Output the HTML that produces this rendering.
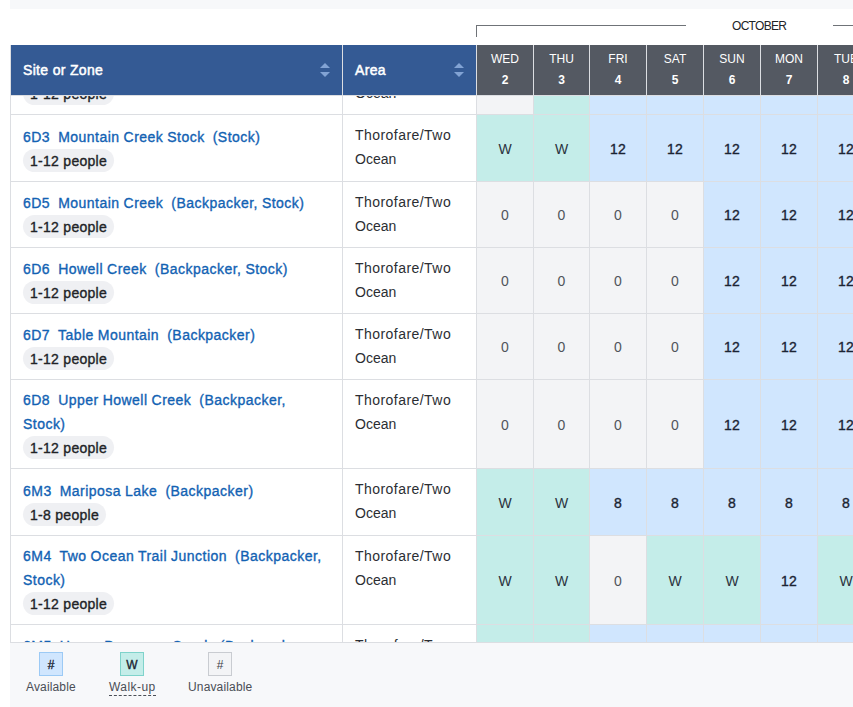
<!DOCTYPE html><html><head><meta charset="utf-8"><style>
*{box-sizing:border-box;margin:0;padding:0}
html,body{width:853px;height:707px;overflow:hidden;background:#fff;font-family:"Liberation Sans",sans-serif;color:#212326}
.a{position:absolute}
.topbar{left:10px;top:0;width:843px;height:9px;background:#f7f8fa}
.mline{height:1px;background:#6f7378}
.month{font-size:12px;letter-spacing:-0.7px;color:#212326;line-height:14px}
.clip{left:0;top:0;width:853px;height:642px;overflow:hidden}
.hb{background:#345a94;color:#fff;font-size:14px;line-height:16px;-webkit-text-stroke:0.5px #fff;letter-spacing:0.33px}
.hd{background:#545962;color:#fff;text-align:center;font-size:12px;line-height:14px}
.hd b{font-weight:bold}
.vl{width:1px;background:#dcdee2}
.hl{height:1px;background:#dcdee2}
.title{color:#1262b3;font-size:14px;line-height:24px;white-space:nowrap;-webkit-text-stroke:0.35px #1262b3;letter-spacing:0.47px;word-spacing:-0.32px}
.pill{background:#eff0f3;border-radius:12px;height:23px;font-size:14px;line-height:25px;padding:0 7px;white-space:nowrap;-webkit-text-stroke:0.35px #212326;letter-spacing:0.28px}
.area{color:#2b2e33;font-size:14px;line-height:24px;letter-spacing:0.45px;white-space:nowrap}
.cell{text-align:center;font-size:14px;padding-top:1px}
.cA{background:#d0e6fe;color:#1b2433;-webkit-text-stroke:0.35px #1b2433;letter-spacing:0.2px}
.cW{background:#c4ede9;color:#2b3340}
.cU{background:#f3f4f6;color:#50545b}
.tri{width:0;height:0;border-left:5px solid transparent;border-right:5px solid transparent}
.up{border-bottom:5px solid #82a3d4}
.dn{border-top:5px solid #82a3d4}
.legend{left:10px;top:642px;width:843px;height:65px;background:#f7f8fa;border-top:1px solid #dcdee2}
.sw{width:24px;height:24px;text-align:center;font-size:12px;line-height:24px}
.lab{font-size:12px;line-height:14px;color:#4a4e56;white-space:nowrap;letter-spacing:0.15px}
</style></head><body>

<div class="a topbar"></div>
<div class="a" style="left:476px;top:25px;width:1px;height:12px;background:#6f7378"></div>
<div class="a mline" style="left:476px;top:25px;width:210px"></div>
<div class="a mline" style="left:833px;top:25px;width:30px"></div>
<div class="a month" style="left:732px;top:19px">OCTOBER</div>
<div class="a clip">
<div class="a title" style="left:23px;top:57.85px">6D2&nbsp; Mountain Creek &nbsp;(Stock)</div>
<div class="a pill" style="left:23px;top:82.35px">1-12 people</div>
<div class="a area" style="left:355px;top:56.95px">Thorofare/Two</div>
<div class="a area" style="left:355px;top:80.95px;letter-spacing:0">Ocean</div>
<div class="a cell cU" style="left:477px;top:49px;width:56px;height:65px;line-height:65px"></div>
<div class="a cell cW" style="left:534px;top:49px;width:55px;height:65px;line-height:65px">W</div>
<div class="a cell cA" style="left:590px;top:49px;width:56px;height:65px;line-height:65px"></div>
<div class="a cell cA" style="left:647px;top:49px;width:56px;height:65px;line-height:65px"></div>
<div class="a cell cA" style="left:704px;top:49px;width:56px;height:65px;line-height:65px"></div>
<div class="a cell cA" style="left:761px;top:49px;width:56px;height:65px;line-height:65px"></div>
<div class="a cell cA" style="left:818px;top:49px;width:56px;height:65px;line-height:65px"></div>
<div class="a hl" style="left:10px;top:114px;width:843px"></div>
<div class="a title" style="left:23px;top:124.85px">6D3&nbsp; Mountain Creek Stock &nbsp;(Stock)</div>
<div class="a pill" style="left:23px;top:149.35px">1-12 people</div>
<div class="a area" style="left:355px;top:122.95px">Thorofare/Two</div>
<div class="a area" style="left:355px;top:146.95px;letter-spacing:0">Ocean</div>
<div class="a cell cW" style="left:477px;top:115px;width:56px;height:66px;line-height:66px">W</div>
<div class="a cell cW" style="left:534px;top:115px;width:55px;height:66px;line-height:66px">W</div>
<div class="a cell cA" style="left:590px;top:115px;width:56px;height:66px;line-height:66px">12</div>
<div class="a cell cA" style="left:647px;top:115px;width:56px;height:66px;line-height:66px">12</div>
<div class="a cell cA" style="left:704px;top:115px;width:56px;height:66px;line-height:66px">12</div>
<div class="a cell cA" style="left:761px;top:115px;width:56px;height:66px;line-height:66px">12</div>
<div class="a cell cA" style="left:818px;top:115px;width:56px;height:66px;line-height:66px">12</div>
<div class="a hl" style="left:10px;top:181px;width:843px"></div>
<div class="a title" style="left:23px;top:190.85px">6D5&nbsp; Mountain Creek &nbsp;(Backpacker, Stock)</div>
<div class="a pill" style="left:23px;top:215.35px">1-12 people</div>
<div class="a area" style="left:355px;top:189.95px">Thorofare/Two</div>
<div class="a area" style="left:355px;top:213.95px;letter-spacing:0">Ocean</div>
<div class="a cell cU" style="left:477px;top:182px;width:56px;height:65px;line-height:65px">0</div>
<div class="a cell cU" style="left:534px;top:182px;width:55px;height:65px;line-height:65px">0</div>
<div class="a cell cU" style="left:590px;top:182px;width:56px;height:65px;line-height:65px">0</div>
<div class="a cell cU" style="left:647px;top:182px;width:56px;height:65px;line-height:65px">0</div>
<div class="a cell cA" style="left:704px;top:182px;width:56px;height:65px;line-height:65px">12</div>
<div class="a cell cA" style="left:761px;top:182px;width:56px;height:65px;line-height:65px">12</div>
<div class="a cell cA" style="left:818px;top:182px;width:56px;height:65px;line-height:65px">12</div>
<div class="a hl" style="left:10px;top:247px;width:843px"></div>
<div class="a title" style="left:23px;top:256.85px">6D6&nbsp; Howell Creek &nbsp;(Backpacker, Stock)</div>
<div class="a pill" style="left:23px;top:281.35px">1-12 people</div>
<div class="a area" style="left:355px;top:255.95px">Thorofare/Two</div>
<div class="a area" style="left:355px;top:279.95px;letter-spacing:0">Ocean</div>
<div class="a cell cU" style="left:477px;top:248px;width:56px;height:65px;line-height:65px">0</div>
<div class="a cell cU" style="left:534px;top:248px;width:55px;height:65px;line-height:65px">0</div>
<div class="a cell cU" style="left:590px;top:248px;width:56px;height:65px;line-height:65px">0</div>
<div class="a cell cU" style="left:647px;top:248px;width:56px;height:65px;line-height:65px">0</div>
<div class="a cell cA" style="left:704px;top:248px;width:56px;height:65px;line-height:65px">12</div>
<div class="a cell cA" style="left:761px;top:248px;width:56px;height:65px;line-height:65px">12</div>
<div class="a cell cA" style="left:818px;top:248px;width:56px;height:65px;line-height:65px">12</div>
<div class="a hl" style="left:10px;top:313px;width:843px"></div>
<div class="a title" style="left:23px;top:322.85px">6D7&nbsp; Table Mountain &nbsp;(Backpacker)</div>
<div class="a pill" style="left:23px;top:347.35px">1-12 people</div>
<div class="a area" style="left:355px;top:321.95px">Thorofare/Two</div>
<div class="a area" style="left:355px;top:345.95px;letter-spacing:0">Ocean</div>
<div class="a cell cU" style="left:477px;top:314px;width:56px;height:65px;line-height:65px">0</div>
<div class="a cell cU" style="left:534px;top:314px;width:55px;height:65px;line-height:65px">0</div>
<div class="a cell cU" style="left:590px;top:314px;width:56px;height:65px;line-height:65px">0</div>
<div class="a cell cU" style="left:647px;top:314px;width:56px;height:65px;line-height:65px">0</div>
<div class="a cell cA" style="left:704px;top:314px;width:56px;height:65px;line-height:65px">12</div>
<div class="a cell cA" style="left:761px;top:314px;width:56px;height:65px;line-height:65px">12</div>
<div class="a cell cA" style="left:818px;top:314px;width:56px;height:65px;line-height:65px">12</div>
<div class="a hl" style="left:10px;top:379px;width:843px"></div>
<div class="a title" style="left:23px;top:387.65px">6D8&nbsp; Upper Howell Creek &nbsp;(Backpacker,</div>
<div class="a title" style="left:23px;top:411.65px">Stock)</div>
<div class="a pill" style="left:23px;top:436.15px">1-12 people</div>
<div class="a area" style="left:355px;top:387.95px">Thorofare/Two</div>
<div class="a area" style="left:355px;top:411.95px;letter-spacing:0">Ocean</div>
<div class="a cell cU" style="left:477px;top:380px;width:56px;height:88px;line-height:88px">0</div>
<div class="a cell cU" style="left:534px;top:380px;width:55px;height:88px;line-height:88px">0</div>
<div class="a cell cU" style="left:590px;top:380px;width:56px;height:88px;line-height:88px">0</div>
<div class="a cell cU" style="left:647px;top:380px;width:56px;height:88px;line-height:88px">0</div>
<div class="a cell cA" style="left:704px;top:380px;width:56px;height:88px;line-height:88px">12</div>
<div class="a cell cA" style="left:761px;top:380px;width:56px;height:88px;line-height:88px">12</div>
<div class="a cell cA" style="left:818px;top:380px;width:56px;height:88px;line-height:88px">12</div>
<div class="a hl" style="left:10px;top:468px;width:843px"></div>
<div class="a title" style="left:23px;top:478.85px">6M3&nbsp; Mariposa Lake &nbsp;(Backpacker)</div>
<div class="a pill" style="left:23px;top:503.35px">1-8 people</div>
<div class="a area" style="left:355px;top:476.95px">Thorofare/Two</div>
<div class="a area" style="left:355px;top:500.95px;letter-spacing:0">Ocean</div>
<div class="a cell cW" style="left:477px;top:469px;width:56px;height:66px;line-height:66px">W</div>
<div class="a cell cW" style="left:534px;top:469px;width:55px;height:66px;line-height:66px">W</div>
<div class="a cell cA" style="left:590px;top:469px;width:56px;height:66px;line-height:66px">8</div>
<div class="a cell cA" style="left:647px;top:469px;width:56px;height:66px;line-height:66px">8</div>
<div class="a cell cA" style="left:704px;top:469px;width:56px;height:66px;line-height:66px">8</div>
<div class="a cell cA" style="left:761px;top:469px;width:56px;height:66px;line-height:66px">8</div>
<div class="a cell cA" style="left:818px;top:469px;width:56px;height:66px;line-height:66px">8</div>
<div class="a hl" style="left:10px;top:535px;width:843px"></div>
<div class="a title" style="left:23px;top:543.65px">6M4&nbsp; Two Ocean Trail Junction &nbsp;(Backpacker,</div>
<div class="a title" style="left:23px;top:567.65px">Stock)</div>
<div class="a pill" style="left:23px;top:592.15px">1-12 people</div>
<div class="a area" style="left:355px;top:543.95px">Thorofare/Two</div>
<div class="a area" style="left:355px;top:567.95px;letter-spacing:0">Ocean</div>
<div class="a cell cW" style="left:477px;top:536px;width:56px;height:88px;line-height:88px">W</div>
<div class="a cell cW" style="left:534px;top:536px;width:55px;height:88px;line-height:88px">W</div>
<div class="a cell cU" style="left:590px;top:536px;width:56px;height:88px;line-height:88px">0</div>
<div class="a cell cW" style="left:647px;top:536px;width:56px;height:88px;line-height:88px">W</div>
<div class="a cell cW" style="left:704px;top:536px;width:56px;height:88px;line-height:88px">W</div>
<div class="a cell cA" style="left:761px;top:536px;width:56px;height:88px;line-height:88px">12</div>
<div class="a cell cW" style="left:818px;top:536px;width:56px;height:88px;line-height:88px">W</div>
<div class="a hl" style="left:10px;top:624px;width:843px"></div>
<div class="a title" style="left:23px;top:633.65px">6M5&nbsp; Upper Pacarena Creek &nbsp;(Backpacker,</div>
<div class="a title" style="left:23px;top:657.65px">Stock)</div>
<div class="a pill" style="left:23px;top:682.15px">1-12 people</div>
<div class="a area" style="left:355px;top:632.95px">Thorofare/Two</div>
<div class="a area" style="left:355px;top:656.95px;letter-spacing:0">Ocean</div>
<div class="a cell cW" style="left:477px;top:625px;width:56px;height:88px;line-height:88px">W</div>
<div class="a cell cW" style="left:534px;top:625px;width:55px;height:88px;line-height:88px">W</div>
<div class="a cell cA" style="left:590px;top:625px;width:56px;height:88px;line-height:88px"></div>
<div class="a cell cA" style="left:647px;top:625px;width:56px;height:88px;line-height:88px"></div>
<div class="a cell cA" style="left:704px;top:625px;width:56px;height:88px;line-height:88px"></div>
<div class="a cell cA" style="left:761px;top:625px;width:56px;height:88px;line-height:88px"></div>
<div class="a cell cA" style="left:818px;top:625px;width:56px;height:88px;line-height:88px"></div>
<div class="a hl" style="left:10px;top:713px;width:843px"></div>
<div class="a vl" style="left:10px;top:45px;height:600px"></div>
<div class="a vl" style="left:342px;top:45px;height:600px"></div>
<div class="a vl" style="left:476px;top:45px;height:600px"></div>
<div class="a vl" style="left:533px;top:45px;height:600px"></div>
<div class="a vl" style="left:589px;top:45px;height:600px"></div>
<div class="a vl" style="left:646px;top:45px;height:600px"></div>
<div class="a vl" style="left:703px;top:45px;height:600px"></div>
<div class="a vl" style="left:760px;top:45px;height:600px"></div>
<div class="a vl" style="left:817px;top:45px;height:600px"></div>
<div class="a hl" style="left:10px;top:95px;width:843px"></div>
<div class="a hb" style="left:11px;top:45px;width:331px;height:50px"><div class="a" style="left:12px;top:17px">Site or Zone</div><div class="a tri up" style="left:309px;top:18px"></div><div class="a tri dn" style="left:309px;top:27px"></div></div>
<div class="a hb" style="left:343px;top:45px;width:133px;height:50px"><div class="a" style="left:12px;top:17px">Area</div><div class="a tri up" style="left:111px;top:18px"></div><div class="a tri dn" style="left:111px;top:27px"></div></div>
<div class="a hd" style="left:477px;top:45px;width:56px;height:50px"><div class="a" style="left:0;right:0;top:7px">WED</div><div class="a" style="left:0;right:0;top:28px"><b>2</b></div></div>
<div class="a hd" style="left:534px;top:45px;width:55px;height:50px"><div class="a" style="left:0;right:0;top:7px">THU</div><div class="a" style="left:0;right:0;top:28px"><b>3</b></div></div>
<div class="a hd" style="left:590px;top:45px;width:56px;height:50px"><div class="a" style="left:0;right:0;top:7px">FRI</div><div class="a" style="left:0;right:0;top:28px"><b>4</b></div></div>
<div class="a hd" style="left:647px;top:45px;width:56px;height:50px"><div class="a" style="left:0;right:0;top:7px">SAT</div><div class="a" style="left:0;right:0;top:28px"><b>5</b></div></div>
<div class="a hd" style="left:704px;top:45px;width:56px;height:50px"><div class="a" style="left:0;right:0;top:7px">SUN</div><div class="a" style="left:0;right:0;top:28px"><b>6</b></div></div>
<div class="a hd" style="left:761px;top:45px;width:56px;height:50px"><div class="a" style="left:0;right:0;top:7px">MON</div><div class="a" style="left:0;right:0;top:28px"><b>7</b></div></div>
<div class="a hd" style="left:818px;top:45px;width:56px;height:50px"><div class="a" style="left:0;right:0;top:7px">TUE</div><div class="a" style="left:0;right:0;top:28px"><b>8</b></div></div>
</div>
<div class="a legend"></div>
<div class="a sw" style="left:39px;top:652px;background:#d0e6fe;border:1px solid #9ccaf5;-webkit-text-stroke:0.35px #1b2433;color:#1b2433">#</div>
<div class="a lab" style="left:26px;top:680px">Available</div>
<div class="a sw" style="left:120px;top:652px;background:#c4ede9;border:1px solid #7fd3cb;-webkit-text-stroke:0.35px #1b2433;color:#1b2433">W</div>
<div class="a lab" style="left:109px;top:680px;border-bottom:1px dashed #4a4e56;padding-bottom:1px;letter-spacing:0.45px">Walk-up</div>
<div class="a sw" style="left:208px;top:652px;background:#f3f4f6;border:1px solid #c9ccd1;color:#3d4148">#</div>
<div class="a lab" style="left:188px;top:680px">Unavailable</div>
</body></html>
